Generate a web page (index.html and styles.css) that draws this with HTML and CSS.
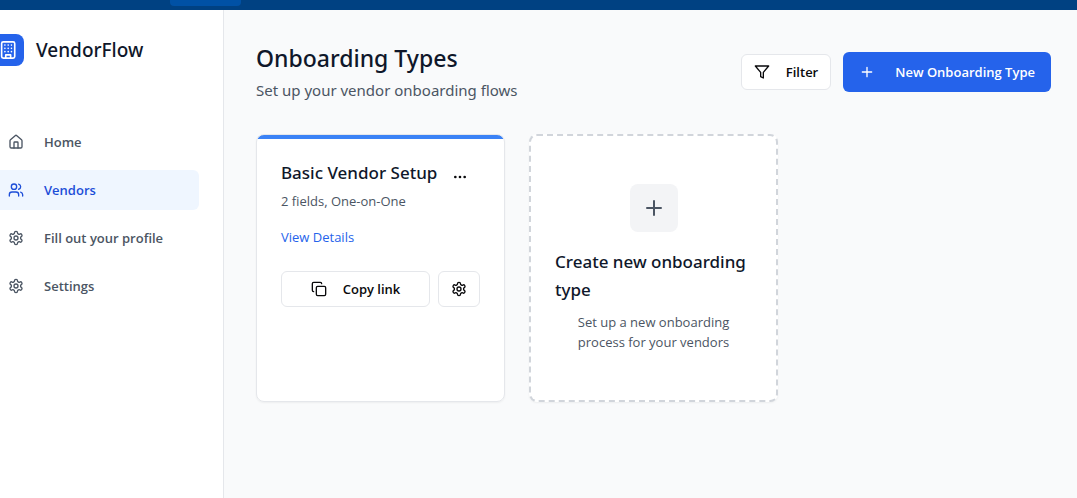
FILE: index.html
```html
<!DOCTYPE html>
<html lang="en">
<head>
<meta charset="utf-8">
<meta name="viewport" content="width=device-width, initial-scale=1">
<title>VendorFlow</title>
<link rel="stylesheet" href="styles.css">
</head>
<body>
<svg class="sprite" aria-hidden="true">
  <symbol id="gear" viewBox="0 0 24 24"><path d="M12.22 2h-.44a2 2 0 0 0-2 2v.18a2 2 0 0 1-1 1.73l-.43.25a2 2 0 0 1-2 0l-.15-.08a2 2 0 0 0-2.73.73l-.22.38a2 2 0 0 0 .73 2.73l.15.1a2 2 0 0 1 1 1.72v.51a2 2 0 0 1-1 1.74l-.15.09a2 2 0 0 0-.73 2.73l.22.38a2 2 0 0 0 2.73.73l.15-.08a2 2 0 0 1 2 0l.43.25a2 2 0 0 1 1 1.73V20a2 2 0 0 0 2 2h.44a2 2 0 0 0 2-2v-.18a2 2 0 0 1 1-1.73l.43-.25a2 2 0 0 1 2 0l.15.08a2 2 0 0 0 2.73-.73l.22-.39a2 2 0 0 0-.73-2.73l-.15-.08a2 2 0 0 1-1-1.74v-.5a2 2 0 0 1 1-1.74l.15-.09a2 2 0 0 0 .73-2.73l-.22-.38a2 2 0 0 0-2.73-.73l-.15.08a2 2 0 0 1-2 0l-.43-.25a2 2 0 0 1-1-1.73V4a2 2 0 0 0-2-2z"/><circle cx="12" cy="12" r="3"/></symbol>
  <symbol id="plus" viewBox="0 0 24 24"><path d="M5 12h14M12 5v14"/></symbol>
</svg>
<div class="topbar"><div class="tab"></div></div>
<div class="app">
  <aside class="sidebar">
    <div class="brand">
      <div class="logo">
        <svg class="icon" viewBox="2 0 22 24" aria-hidden="true"><rect x="4" y="2" width="16" height="20" rx="2"/><path d="M9 22v-4h6v4M8 6h.01M16 6h.01M12 6h.01M12 10h.01M12 14h.01M16 10h.01M16 14h.01M8 10h.01M8 14h.01"/></svg>
      </div>
      <span class="brand-name">VendorFlow</span>
    </div>
    <nav class="nav">
      <a class="nav-link" href="#"><svg class="icon" viewBox="0 0 24 24" aria-hidden="true"><path d="M15 21v-8a1 1 0 0 0-1-1h-4a1 1 0 0 0-1 1v8"/><path d="M3 10a2 2 0 0 1 .709-1.528l7-5.999a2 2 0 0 1 2.582 0l7 5.999A2 2 0 0 1 21 10v9a2 2 0 0 1-2 2H5a2 2 0 0 1-2-2z"/></svg>Home</a>
      <a class="nav-link active" href="#" aria-current="page"><svg class="icon" viewBox="0 0 24 24" aria-hidden="true"><path d="M16 21v-2a4 4 0 0 0-4-4H6a4 4 0 0 0-4 4v2"/><circle cx="9" cy="7" r="4"/><path d="M22 21v-2a4 4 0 0 0-3-3.87M16 3.13a4 4 0 0 1 0 7.75"/></svg>Vendors</a>
      <a class="nav-link" href="#"><svg class="icon" aria-hidden="true"><use href="#gear"/></svg>Fill out your profile</a>
      <a class="nav-link" href="#"><svg class="icon" aria-hidden="true"><use href="#gear"/></svg>Settings</a>
    </nav>
  </aside>
  <main class="main">
    <header class="header">
      <div>
        <h1 class="title">Onboarding Types</h1>
        <p class="subtitle">Set up your vendor onboarding flows</p>
      </div>
      <div class="actions">
        <button class="button filter" type="button"><svg class="icon" viewBox="0 0 24 24" aria-hidden="true"><path d="M22 3H2l8 9.46V19l4 2v-8.54z"/></svg>Filter</button>
        <button class="button primary" type="button"><svg class="icon" aria-hidden="true"><use href="#plus"/></svg>New Onboarding Type</button>
      </div>
    </header>
    <div class="cards">
      <article class="card">
        <div class="card-head">
          <div>
            <h2 class="card-title">Basic Vendor Setup</h2>
            <p class="meta">2 fields, One-on-One</p>
          </div>
          <button class="more" type="button" aria-label="More options"><svg class="icon" viewBox="0 0 24 24" aria-hidden="true"><circle cx="12" cy="12" r="1"/><circle cx="19" cy="12" r="1"/><circle cx="5" cy="12" r="1"/></svg></button>
        </div>
        <a class="details" href="#">View Details</a>
        <div class="card-actions">
          <button class="button copy" type="button"><svg class="icon" viewBox="0 0 24 24" aria-hidden="true"><rect x="8" y="8" width="14" height="14" rx="2"/><path d="M4 16c-1.1 0-2-.9-2-2V4c0-1.1.9-2 2-2h10c1.1 0 2 .9 2 2"/></svg>Copy link</button>
          <button class="button configure" type="button" aria-label="Configure"><svg class="icon" aria-hidden="true"><use href="#gear"/></svg></button>
        </div>
      </article>
      <article class="card create">
        <div class="plus-box"><svg class="icon" aria-hidden="true"><use href="#plus"/></svg></div>
        <h2 class="card-title">Create new onboarding type</h2>
        <p class="meta">Set up a new onboarding process for your vendors</p>
      </article>
    </div>
  </main>
</div>
</body>
</html>
```
FILE: styles.css
```css
* { box-sizing: border-box; }
body {
  margin: 0;
  min-height: 100vh;
  display: flex;
  flex-direction: column;
  font-family: "Open Sans", "Noto Sans", sans-serif;
  font-size: 13px;
  line-height: 20px;
  color: #0f172a;
  background: #f9fafb;
}
h1, h2, p { margin: 0; }
a { text-decoration: none; }
.sprite { position: absolute; width: 0; height: 0; }
.icon {
  width: 16px;
  height: 16px;
  flex: none;
  fill: none;
  stroke: currentColor;
  stroke-width: 2;
  stroke-linecap: round;
  stroke-linejoin: round;
}
.topbar { height: 10px; padding-left: 170px; background: #004182; }
.tab { width: 71px; height: 6px; border-radius: 0 0 4px 4px; background: #0051a5; }
.app { flex: 1; display: flex; }
.sidebar { width: 224px; flex: none; background: #fff; border-right: 1px solid #e5e7eb; }
.brand { display: flex; align-items: center; gap: 12px; padding-top: 24px; }
.logo {
  width: 24px;
  height: 32px;
  display: flex;
  align-items: center;
  border-radius: 0 8px 8px 0;
  color: #fff;
  background: #2563eb;
}
.logo .icon { width: 18px; height: 20px; }
.brand-name, .title, .subtitle, .card-title { font-family: "Noto Sans", "Open Sans", sans-serif; }
.brand-name { font-size: 19px; line-height: 28px; font-weight: 500; }
.nav { display: flex; flex-direction: column; gap: 8px; padding: 56px 24px 0 0; }
.nav-link {
  display: flex;
  align-items: center;
  gap: 20px;
  padding: 10px 8px;
  border-radius: 0 6px 6px 0;
  font-weight: 600;
  color: #4b5563;
}
.nav-link.active { color: #1d4ed8; background: #eff6ff; }
.main { flex: 1; min-width: 0; padding: 32px 26px 32px 32px; }
.header { display: flex; justify-content: space-between; align-items: center; margin-bottom: 32px; }
.title { font-size: 23px; line-height: 32px; font-weight: 500; }
.subtitle { margin-top: 4px; font-size: 15px; line-height: 24px; color: #4b5563; }
.actions { display: flex; align-items: center; gap: 12px; }
.button {
  display: flex;
  align-items: center;
  justify-content: center;
  gap: 16px;
  height: 36px;
  padding: 0 12px;
  border: 1px solid #e5e7eb;
  border-radius: 6px;
  font: inherit;
  font-weight: 600;
  color: #09090b;
  background: #fff;
}
.button.primary { gap: 20px; height: 40px; padding: 0 16px; border: 0; color: #fff; background: #2563eb; }
.cards { display: grid; grid-template-columns: repeat(3, minmax(0, 1fr)); gap: 24px; }
.card {
  min-height: 268px;
  padding: 24px;
  border: 1px solid #e5e7eb;
  border-radius: 8px;
  background: linear-gradient(#3b82f6 4px, #fff 4px);
  box-shadow: 0 1px 2px rgb(0 0 0 / 5%);
}
.card-head { display: flex; justify-content: space-between; align-items: flex-start; }
.card-title { font-size: 17px; line-height: 28px; font-weight: 500; }
.more { display: flex; padding: 10px 12px; border: 0; color: #09090b; background: none; }
.meta { margin-top: 4px; color: #4b5563; }
.details { display: block; margin-top: 16px; color: #2563eb; }
.card-actions { display: flex; gap: 8px; margin-top: 24px; }
.copy { flex: 1; }
.create {
  display: flex;
  flex-direction: column;
  align-items: center;
  justify-content: center;
  border: 2px dashed #d1d5db;
  background: #fff;
}
.create .meta { margin-top: 8px; text-align: center; }
.plus-box {
  display: grid;
  place-items: center;
  width: 48px;
  height: 48px;
  margin-bottom: 16px;
  border-radius: 8px;
  color: #4b5563;
  background: #f3f4f6;
}
.plus-box .icon { width: 24px; height: 24px; }
```
